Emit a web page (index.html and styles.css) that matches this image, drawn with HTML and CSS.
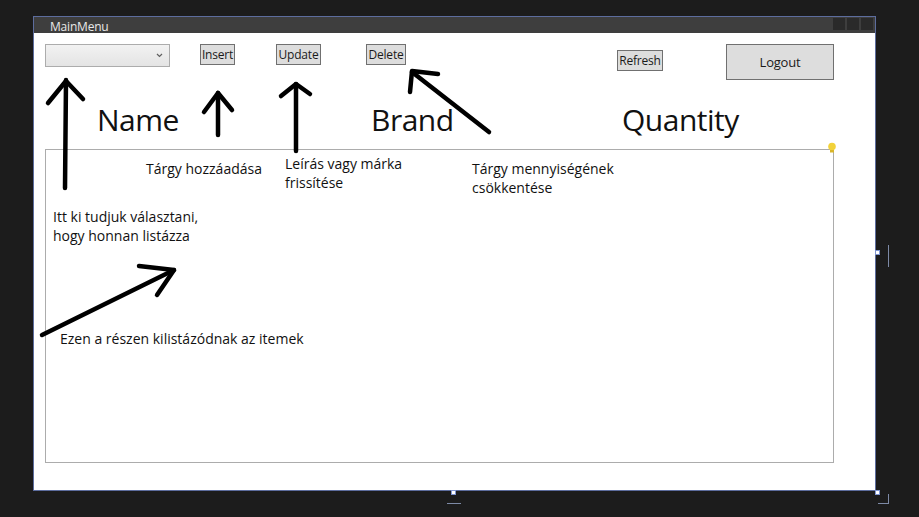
FILE: index.html
```html
<!DOCTYPE html>
<html lang="hu">
<head>
<meta charset="utf-8">
<title>MainMenu</title>
<link rel="stylesheet" href="styles.css">
</head>
<body>
<div class="window">
  <div class="titlebar">
    <span class="title">MainMenu</span>
    <div class="ctrls"><span></span><span></span><span></span></div>
  </div>
  <div class="client">
    <div class="toolbar">
      <div class="combo">
        <svg class="chev" width="7" height="5" viewBox="0 0 7 5"><path d="M1 1 L3.5 3.5 L6 1" fill="none" stroke="#606060" stroke-width="1.2"/></svg>
      </div>
      <button class="btn insert">Insert</button>
      <button class="btn update">Update</button>
      <button class="btn delete">Delete</button>
      <button class="btn refresh">Refresh</button>
      <button class="btn logout">Logout</button>
    </div>
    <div class="headers">
      <span class="hdr">Name</span>
      <span class="hdr">Brand</span>
      <span class="hdr">Quantity</span>
    </div>
    <div class="list"></div>
  </div>
</div>

<div class="annot">
  <svg class="bulb" width="10" height="12" viewBox="0 0 10 12"><circle cx="5" cy="4.5" r="3.8" fill="#f2d23a"/><rect x="3" y="8" width="4" height="2.5" fill="#d9b62a"/></svg>
  <div class="note n1">Tárgy hozzáadása</div>
  <div class="note n2">Leírás vagy márka<br>frissítése</div>
  <div class="note n3">Tárgy mennyiségének<br>csökkentése</div>
  <div class="note n4">Itt ki tudjuk választani,<br>hogy honnan listázza</div>
  <div class="note n5">Ezen a részen kilistázódnak az itemek</div>
  <svg class="arrows" width="919" height="517" viewBox="0 0 919 517">
    <g fill="none" stroke="#000" stroke-width="4.5" stroke-linecap="round" stroke-linejoin="round">
      <path d="M65 188 L66 80"/>
      <path d="M48 103 L66 81 L83 99"/>
      <path d="M218 135 L218 93"/>
      <path d="M204 112 L218 93 L232 110"/>
      <path d="M296 151 L296 84"/>
      <path d="M281 96 L296 84 L310 94"/>
      <path d="M489 132 L412 72"/>
      <path d="M438 74 L412 71 L410 92"/>
      <path d="M42 335 L174 270"/>
      <path d="M139 266 L174 270 L157 295"/>
    </g>
  </svg>
  <div class="handle h1"></div>
  <div class="handle h2"></div>
  <div class="handle h3"></div>
  <div class="mark m1"></div>
  <div class="mark m2"></div>
  <div class="mark m3"></div>
</div>
</body>
</html>
```

FILE: styles.css
```css
html, body {
  margin: 0;
  padding: 0;
}
body {
  width: 919px;
  height: 517px;
  background: #1c1c1c;
  overflow: hidden;
  position: relative;
  font-family: "Open Sans", "Noto Sans", sans-serif;
}
.window {
  margin: 16px 0 0 33px;
  width: 841px;
  height: 473px;
  border: 1px solid #5d6d9e;
  background: #ffffff;
  display: flex;
  flex-direction: column;
}
.titlebar {
  height: 16px;
  background: #3e3e3e;
  display: flex;
  align-items: flex-start;
  justify-content: space-between;
  padding: 0 2px 0 16px;
}
.title {
  color: #e8e8e8;
  font-size: 12px;
  line-height: 16px;
  margin-top: 2px;
  letter-spacing: -0.2px;
}
.ctrls {
  display: flex;
  gap: 2px;
  margin-top: 1px;
}
.ctrls span {
  width: 12px;
  height: 12px;
  background: #2a2a2a;
}
.client {
  flex: 1;
  display: flex;
  flex-direction: column;
}
.toolbar {
  display: flex;
  align-items: flex-start;
  margin-top: 11px;
  padding-left: 11px;
  height: 36px;
}
.combo {
  width: 117px;
  height: 21px;
  border: 1px solid #acacac;
  background: linear-gradient(#f2f2f2, #e4e4e4);
  display: flex;
  align-items: center;
  justify-content: flex-end;
  padding-right: 6px;
}
.btn {
  font-family: "Open Sans", "Noto Sans", sans-serif;
  font-size: 12px;
  color: #1a1a1a;
  background: #dddddd;
  border: 1px solid #707070;
  padding: 0;
  height: 21px;
  line-height: 18px;
  letter-spacing: -0.2px;
}
.insert { margin-left: 30px; width: 35px; }
.update { margin-left: 41px; width: 45px; }
.delete { margin-left: 45px; width: 40px; }
.refresh { margin-left: 211px; width: 46px; margin-top: 6px; }
.logout { margin-left: 63px; width: 108px; height: 36px; font-size: 13px; }
.headers {
  display: grid;
  grid-template-columns: 274px 251px auto;
  margin-top: 22px;
  padding-left: 63px;
  height: 36px;
}
.hdr {
  font-size: 30px;
  line-height: 36px;
  color: #111;
  letter-spacing: -0.5px;
}
.list {
  margin: 11px 0 0 11px;
  width: 787px;
  height: 312px;
  border: 1px solid #acacac;
}
.annot {
  position: absolute;
  left: 0;
  top: 0;
  width: 919px;
  height: 517px;
  pointer-events: none;
}
.arrows {
  position: absolute;
  left: 0;
  top: 0;
}
.bulb {
  position: absolute;
  left: 827px;
  top: 142px;
}
.note {
  position: absolute;
  font-size: 14px;
  line-height: 19px;
  color: #111;
  white-space: nowrap;
}
.n1 { left: 146px; top: 159px; }
.n2 { left: 285px; top: 154px; }
.n3 { left: 472px; top: 159px; }
.n4 { left: 53px; top: 207px; }
.n5 { left: 60px; top: 329px; }
.handle {
  position: absolute;
  width: 3px;
  height: 3px;
  background: #fff;
  border: 1px solid #7f95d0;
}
.h1 { left: 451px; top: 490px; }
.h2 { left: 875px; top: 490px; }
.h3 { left: 875px; top: 250px; }
.mark {
  position: absolute;
  background: #7d8aa6;
}
.m1 { left: 447px; top: 503px; width: 14px; height: 1px; }
.m2 { left: 878px; top: 503px; width: 11px; height: 1px; }
.m3 { left: 888px; top: 494px; width: 1px; height: 10px; }
.m3::after {
  content: "";
  position: absolute;
  left: 0;
  top: -249px;
  width: 1px;
  height: 22px;
  background: #7d8aa6;
}
```
